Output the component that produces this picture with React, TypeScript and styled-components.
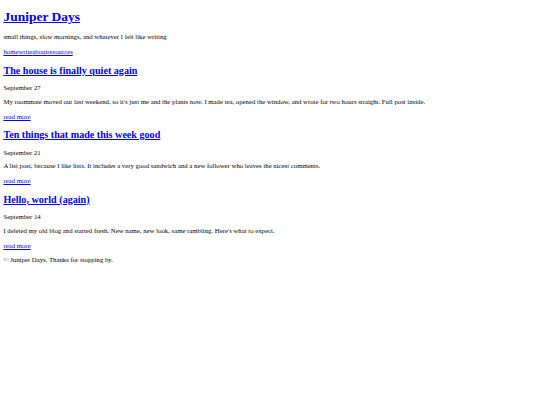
import React from 'react';
import styled, { createGlobalStyle } from 'styled-components';

const GlobalStyle = createGlobalStyle`
  html, body { background: #fff; }
  body {
    margin: 3.4px;
    font-family: "Liberation Serif", "Times New Roman", serif;
    font-size: 6.75px;
    color: #000;
  }
  a { color: #0000ee; }
`

const Header = styled.header``

const SiteTitle = styled.h1`
  font-size: 2em;
  margin: 6px 0 8px;
`

const Tagline = styled.p`
  margin: 6.75px 0 7.75px;
`

const Nav = styled.nav``

const Post = styled.article``

const PostTitle = styled.h2`
  font-size: 1.5em;
  margin: 9.6px 0 8.4px;
`

const Meta = styled.p`
  margin: 6.75px 0;
`

const Excerpt = styled.p`
  margin: 6.75px 0 7.75px;
`

const Footer = styled.footer`
  margin: 7.75px 0;
`

const posts = [
  {
    title: 'The house is finally quiet again',
    date: 'September 27',
    excerpt:
      "My roommate moved out last weekend, so it's just me and the plants now. I made tea, opened the window, and wrote for two hours straight. Full post inside.",
  },
  {
    title: 'Ten things that made this week good',
    date: 'September 21',
    excerpt:
      'A list post, because I like lists. It includes a very good sandwich and a new follower who leaves the nicest comments.',
  },
  {
    title: 'Hello, world (again)',
    date: 'September 14',
    excerpt:
      "I deleted my old blog and started fresh. New name, new look, same rambling. Here's what to expect.",
  },
]

function App() {
  return (
    <>
      <GlobalStyle />
      <Header>
        <SiteTitle><a href="#">Juniper Days</a></SiteTitle>
        <Tagline>small things, slow mornings, and whatever I felt like writing</Tagline>
        <Nav>
          <a href="#">home</a><a href="#">write</a><a href="#">about</a><a href="#">resources</a>
        </Nav>
      </Header>
      <main>
        {posts.map(p => (
          <Post key={p.title}>
            <PostTitle><a href="#">{p.title}</a></PostTitle>
            <Meta>{p.date}</Meta>
            <Excerpt>{p.excerpt}</Excerpt>
            <a href="#">read more</a>
          </Post>
        ))}
      </main>
      <Footer>© Juniper Days. Thanks for stopping by.</Footer>
    </>
  )
}

export default App
